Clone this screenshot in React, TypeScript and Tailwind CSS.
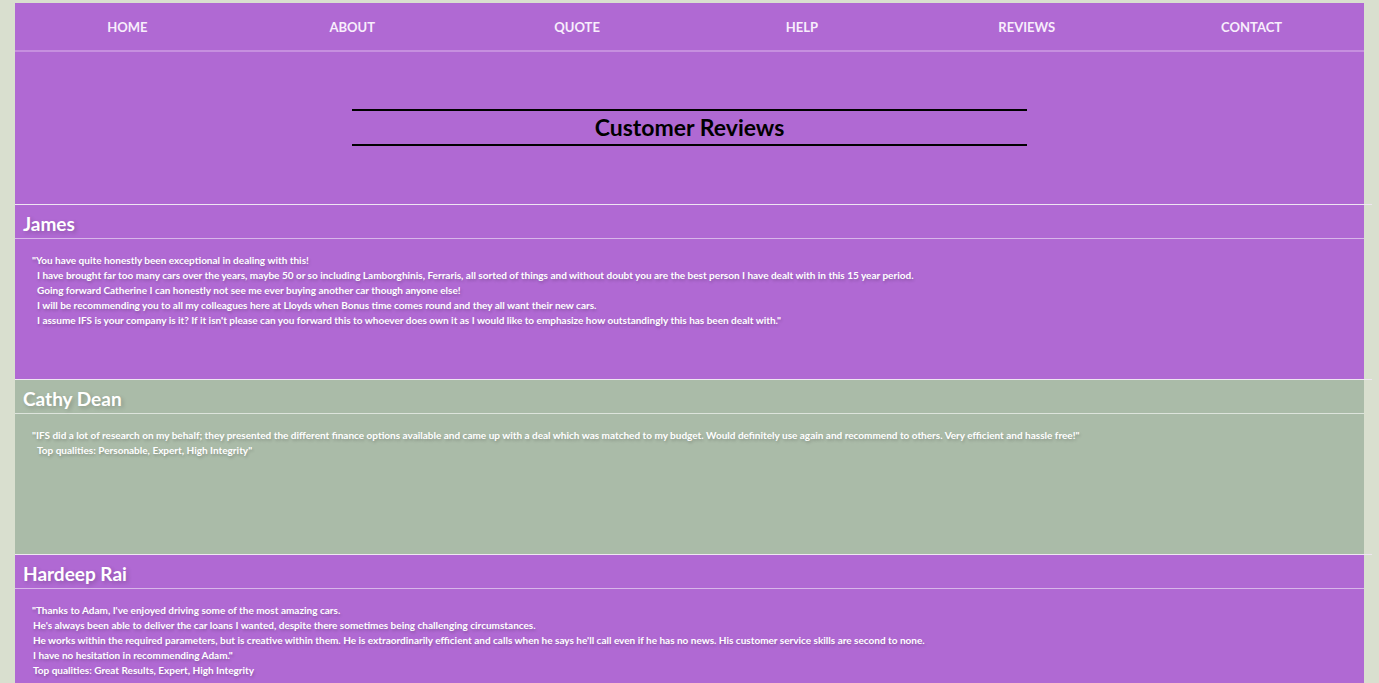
const links = ['HOME', 'ABOUT', 'QUOTE', 'HELP', 'REVIEWS', 'CONTACT'];

type Review = {
  name: string;
  opening: string;
  lines: string[];
  background: string;
  rule: string;
  indent: string;
};

const reviews: Review[] = [
  {
    name: 'James',
    opening: '"You have quite honestly been exceptional in dealing with this!',
    lines: [
      'I have brought far too many cars over the years, maybe 50 or so including Lamborghinis, Ferraris, all sorted of things and without doubt you are the best person I have dealt with in this 15 year period.',
      'Going forward Catherine I can honestly not see me ever buying another car though anyone else!',
      'I will be recommending you to all my colleagues here at Lloyds when Bonus time comes round and they all want their new cars.',
      'I assume IFS is your company is it? If it isn\'t please can you forward this to whoever does own it as I would like to emphasize how outstandingly this has been dealt with."',
    ],
    background: 'bg-[#b069d3]',
    rule: 'border-[#d9b6ea]',
    indent: 'pl-[5px]',
  },
  {
    name: 'Cathy Dean',
    opening:
      '"IFS did a lot of research on my behalf; they presented the different finance options available and came up with a deal which was matched to my budget. Would definitely use again and recommend to others. Very efficient and hassle free!"',
    lines: ['Top qualities: Personable, Expert, High Integrity"'],
    background: 'bg-[#aabba8]',
    rule: 'border-[#dde4dc]',
    indent: 'pl-[5px]',
  },
  {
    name: 'Hardeep Rai',
    opening: '"Thanks to Adam, I\'ve enjoyed driving some of the most amazing cars.',
    lines: [
      "He's always been able to deliver the car loans I wanted, despite there sometimes being challenging circumstances.",
      "He works within the required parameters, but is creative within them. He is extraordinarily efficient and calls when he says he'll call even if he has no news. His customer service skills are second to none.",
      'I have no hesitation in recommending Adam."',
      'Top qualities: Great Results, Expert, High Integrity',
    ],
    background: 'bg-[#b069d3]',
    rule: 'border-[#d9b6ea]',
    indent: 'pl-px',
  },
];

function ReviewCard({ review }: { review: Review }) {
  return (
    <article className={`min-h-[175px] ${review.background}`}>
      <div className="-mr-2 h-px bg-[#efe6f2]" />
      <h2
        className={`border-b px-2 pt-[7px] pb-[2px] text-[19px] leading-6 font-bold text-white text-shadow-[2px_2px_4px_rgb(0_0_0/0.2)] ${review.rule}`}
      >
        {review.name}
      </h2>
      <blockquote className="px-[17px] pt-[14px] text-[10px] leading-[15px] font-bold text-white text-shadow-[1px_2px_3px_rgb(0_0_0/0.2)]">
        <p>{review.opening}</p>
        {review.lines.map((line) => (
          <p key={line} className={review.indent}>
            {line}
          </p>
        ))}
      </blockquote>
    </article>
  );
}

export default function App() {
  return (
    <div className="h-screen overflow-hidden bg-[#d9dfcf] px-[15px] pt-[3px] font-['Lato',sans-serif]">
      <div className="bg-[#b069d3]">
        <nav className="grid grid-cols-6 border-b-2 border-[#c68fdf] text-center">
          {links.map((link) => (
            <a key={link} href={`#${link.toLowerCase()}`} className="pt-[13px] pb-[11px] text-[13px] leading-[23px] font-bold text-[#f8eefc]">
              {link}
            </a>
          ))}
        </nav>
        <header className="flex justify-center pt-[57px] pb-[58px]">
          <h1 className="w-1/2 border-y-2 border-black text-center text-[23px] leading-[33px] font-bold text-black">
            Customer Reviews
          </h1>
        </header>
      </div>
      <main>
        {reviews.map((review) => (
          <ReviewCard key={review.name} review={review} />
        ))}
      </main>
    </div>
  );
}
